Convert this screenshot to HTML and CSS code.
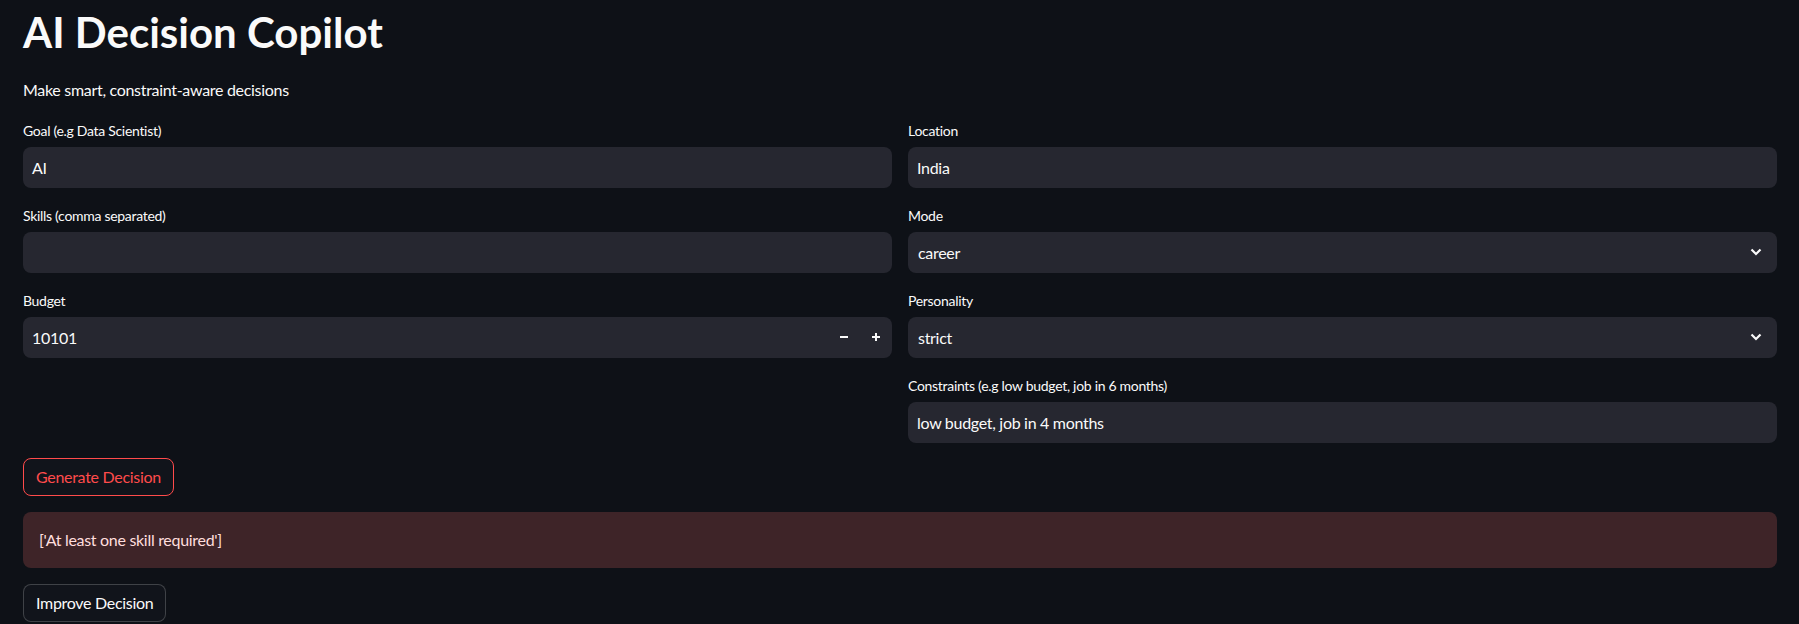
FILE: index.html
```html
<!DOCTYPE html>
<html lang="en">
<head>
<meta charset="utf-8">
<title>AI Decision Copilot</title>
<link rel="stylesheet" href="styles.css">
</head>
<body>
<main class="app">
  <h1 class="title">AI Decision Copilot</h1>
  <p class="subtitle">Make smart, constraint-aware decisions</p>

  <div class="cols">
    <div class="col">
      <div class="field">
        <label class="label">Goal (e.g Data Scientist)</label>
        <div class="input"><span class="value">AI</span></div>
      </div>
      <div class="field">
        <label class="label">Skills (comma separated)</label>
        <div class="input"><span class="value"></span></div>
      </div>
      <div class="field">
        <label class="label">Budget</label>
        <div class="input number">
          <span class="value">10101</span>
          <span class="step"><svg width="10" height="10" viewBox="0 0 10 10"><path d="M1 5h8" stroke="#fafafa" stroke-width="2"/></svg></span>
          <span class="step"><svg width="10" height="10" viewBox="0 0 10 10"><path d="M1 5h8M5 1v8" stroke="#fafafa" stroke-width="2"/></svg></span>
        </div>
      </div>
    </div>
    <div class="col">
      <div class="field">
        <label class="label">Location</label>
        <div class="input"><span class="value">India</span></div>
      </div>
      <div class="field">
        <label class="label">Mode</label>
        <div class="input select">
          <span class="value">career</span>
          <svg class="chev" width="12" height="8" viewBox="0 0 12 8"><path d="M1.5 1.5L6 6l4.5-4.5" fill="none" stroke="#fafafa" stroke-width="2.2"/></svg>
        </div>
      </div>
      <div class="field">
        <label class="label">Personality</label>
        <div class="input select">
          <span class="value">strict</span>
          <svg class="chev" width="12" height="8" viewBox="0 0 12 8"><path d="M1.5 1.5L6 6l4.5-4.5" fill="none" stroke="#fafafa" stroke-width="2.2"/></svg>
        </div>
      </div>
      <div class="field">
        <label class="label">Constraints (e.g low budget, job in 6 months)</label>
        <div class="input"><span class="value">low budget, job in 4 months</span></div>
      </div>
    </div>
  </div>

  <div class="stack">
    <div><button class="btn btn-primary">Generate Decision</button></div>
    <div class="alert">['At least one skill required']</div>
    <div><button class="btn">Improve Decision</button></div>
  </div>
</main>
</body>
</html>
```
FILE: styles.css
```css
* { box-sizing: border-box; }
html, body {
  margin: 0;
  background: #0e1117;
  color: #fafafa;
  font-family: Lato, "Noto Sans", sans-serif;
  letter-spacing: -0.3px;
}
.app {
  padding: 0 22px 0 23px;
}
.title {
  margin: 0;
  padding-top: 6px;
  font-size: 42px;
  line-height: 53px;
  font-weight: 700;
  letter-spacing: 0;
}
.subtitle {
  margin: 18px 0 16px;
  font-size: 16px;
  line-height: 25.6px;
}
.cols {
  display: grid;
  grid-template-columns: 1fr 1fr;
  column-gap: 16px;
}
.col {
  display: flex;
  flex-direction: column;
  gap: 16px;
}
.field {
  display: flex;
  flex-direction: column;
}
.label {
  display: block;
  height: 24px;
  margin-bottom: 4px;
  font-size: 14px;
  line-height: 24px;
}
.input {
  height: 41px;
  background: #262730;
  border-radius: 8px;
  display: flex;
  align-items: center;
  padding-left: 9px;
  font-size: 16px;
}
.value { flex: 1; }
.number { padding-right: 0; }
.step {
  width: 32px;
  height: 100%;
  display: flex;
  align-items: center;
  justify-content: center;
}
.select { padding-left: 10px; padding-right: 15px; }
.chev { display: block; }
.stack {
  margin-top: 15px;
  display: flex;
  flex-direction: column;
  gap: 16px;
}
.btn {
  height: 38px;
  padding: 0 12px;
  background: #11141b;
  color: #fafafa;
  border: 1px solid rgba(250, 250, 250, 0.2);
  border-radius: 8px;
  font-family: inherit;
  font-size: 16px;
  letter-spacing: -0.3px;
  display: inline-flex;
  align-items: center;
}
.btn-primary {
  color: #ff4b4b;
  border-color: #ff4b4b;
}
.alert {
  background: #3e2428;
  color: #ffdede;
  border-radius: 8px;
  padding: 16px;
  font-size: 16px;
  line-height: 24px;
}
```
